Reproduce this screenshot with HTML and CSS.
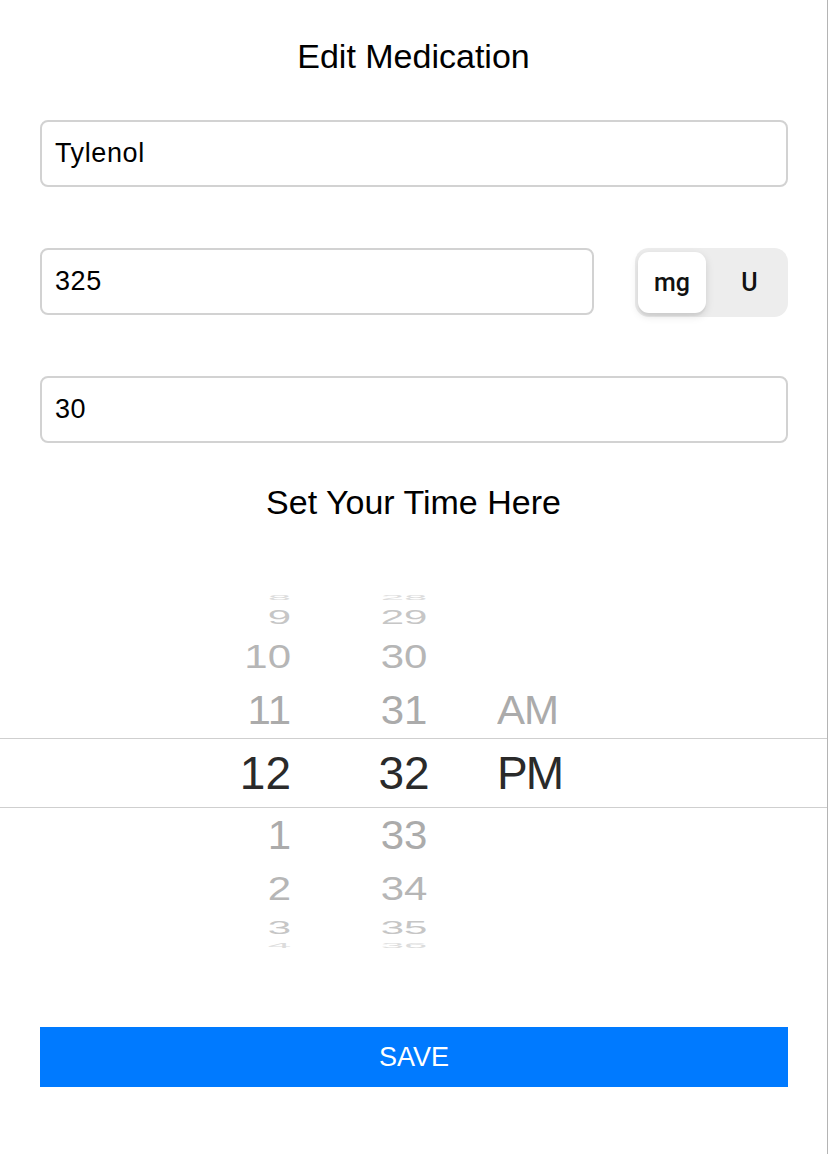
FILE: index.html
```html
<!DOCTYPE html>
<html lang="en">
<head>
<meta charset="utf-8">
<title>Edit Medication</title>
<link rel="stylesheet" href="styles.css">
</head>
<body>
<div class="screen">
  <h1 class="title">Edit Medication</h1>
  <div class="form">
    <div class="field">Tylenol</div>
    <div class="dose-row">
      <div class="field field-dose">325</div>
      <div class="segmented">
        <div class="seg seg-active">mg</div>
        <div class="seg">U</div>
      </div>
    </div>
    <div class="field">30</div>
  </div>
  <h2 class="subtitle">Set Your Time Here</h2>
  <div class="picker">
    <div class="row r4"><span class="h">8</span><span class="m">28</span><span class="ap"></span></div>
    <div class="row r3"><span class="h">9</span><span class="m">29</span><span class="ap"></span></div>
    <div class="row r2"><span class="h">10</span><span class="m">30</span><span class="ap"></span></div>
    <div class="row r1 r1-top"><span class="h">11</span><span class="m">31</span><span class="ap">AM</span></div>
    <div class="row sel"><span class="h">12</span><span class="m">32</span><span class="ap">PM</span></div>
    <div class="row r1 r1-bot"><span class="h">1</span><span class="m">33</span><span class="ap"></span></div>
    <div class="row r2 r2-bot"><span class="h">2</span><span class="m">34</span><span class="ap"></span></div>
    <div class="row r3 r3-bot"><span class="h">3</span><span class="m">35</span><span class="ap"></span></div>
    <div class="row r4 r4-bot"><span class="h">4</span><span class="m">36</span><span class="ap"></span></div>
  </div>
  <div class="actions">
    <button class="save">SAVE</button>
  </div>
</div>
</body>
</html>
```
FILE: styles.css
```css
* { box-sizing: border-box; }
html, body { margin: 0; padding: 0; background: #fff; }
body { font-family: "Liberation Sans", Arial, sans-serif; color: #000; }

.screen {
  width: 828px;
  height: 1154px;
  border-right: 1px solid #b4b4b4;
  overflow: hidden;
}

.title, .subtitle {
  margin: 0;
  font-weight: normal;
  font-size: 34px;
  line-height: 40px;
  text-align: center;
}
.title { padding-top: 36px; }

.form {
  padding: 44px 39px 0 40px;
  display: flex;
  flex-direction: column;
  gap: 61px;
}

.field {
  height: 67px;
  border: 2px solid #d2d2d2;
  border-radius: 8px;
  padding: 0 13px;
  display: flex;
  align-items: center;
  font-size: 27px;
  letter-spacing: 0.6px;
  color: #000;
}

.dose-row {
  display: flex;
  align-items: flex-start;
  gap: 41px;
  height: 67px;
}
.field-dose { flex: 1; }

.segmented {
  width: 153px;
  height: 69px;
  background: #ededed;
  border-radius: 14px;
  padding: 4px 3px;
  display: flex;
  align-items: stretch;
}
.seg {
  flex: 1;
  display: flex;
  align-items: center;
  justify-content: center;
  font-family: Roboto, "Liberation Sans", sans-serif;
  font-weight: 500;
  font-size: 25px;
  color: #111;
  padding-left: 8px;
}
.seg-active {
  flex: 0 0 68px;
  padding-left: 0;
  background: #fff;
  border-radius: 11px;
  box-shadow: 0 3px 8px rgba(0,0,0,0.13), 0 3px 1px rgba(0,0,0,0.04);
}

.subtitle { margin-top: 39px; }

.picker {
  margin-top: 70px;
  display: flex;
  flex-direction: column;
}
.row {
  display: grid;
  grid-template-columns: 291px 206px 1fr;
  grid-template-rows: minmax(0, 1fr);
  align-items: center;
  overflow: hidden;
  font-size: 42px;
  line-height: 1;
  color: #aeaeae;
}
.row span { display: block; }
.row .h { text-align: right; }
.row .m { text-align: center; padding-left: 20px; }
.row .ap { text-align: left; letter-spacing: -1px; }

.r4 { height: 11px; color: #dcdcdc; }
.r4 span { transform: scaleY(0.16); }
.r3 { height: 27px; color: #c6c6c6; }
.r3 span { transform: scaleY(0.5); }
.r2 { height: 53px; color: #b6b6b6; }
.r2 span { transform: scaleY(0.8); }
.r1 { height: 55px; color: #ababab; }
.r1 span { transform: scaleY(0.95); }
.r1-bot { height: 56px; }
.r2-bot { height: 49px; }
.r3-bot { height: 29px; }
.r3-bot span { transform: scaleY(0.45); }
.r4-bot { height: 7px; }

.sel {
  height: 70px;
  border-top: 1px solid #cfcfcf;
  border-bottom: 1px solid #cfcfcf;
  font-size: 46px;
  color: #2a2a2a;
}
.sel .ap { letter-spacing: -2px; }

.actions {
  padding: 78px 39px 0 40px;
}
.save {
  display: block;
  width: 100%;
  height: 60px;
  border: 0;
  border-radius: 0;
  background: #007aff;
  color: #fff;
  font-family: "Liberation Sans", Arial, sans-serif;
  font-size: 27px;
  font-weight: normal;
  padding: 0;
}
```
